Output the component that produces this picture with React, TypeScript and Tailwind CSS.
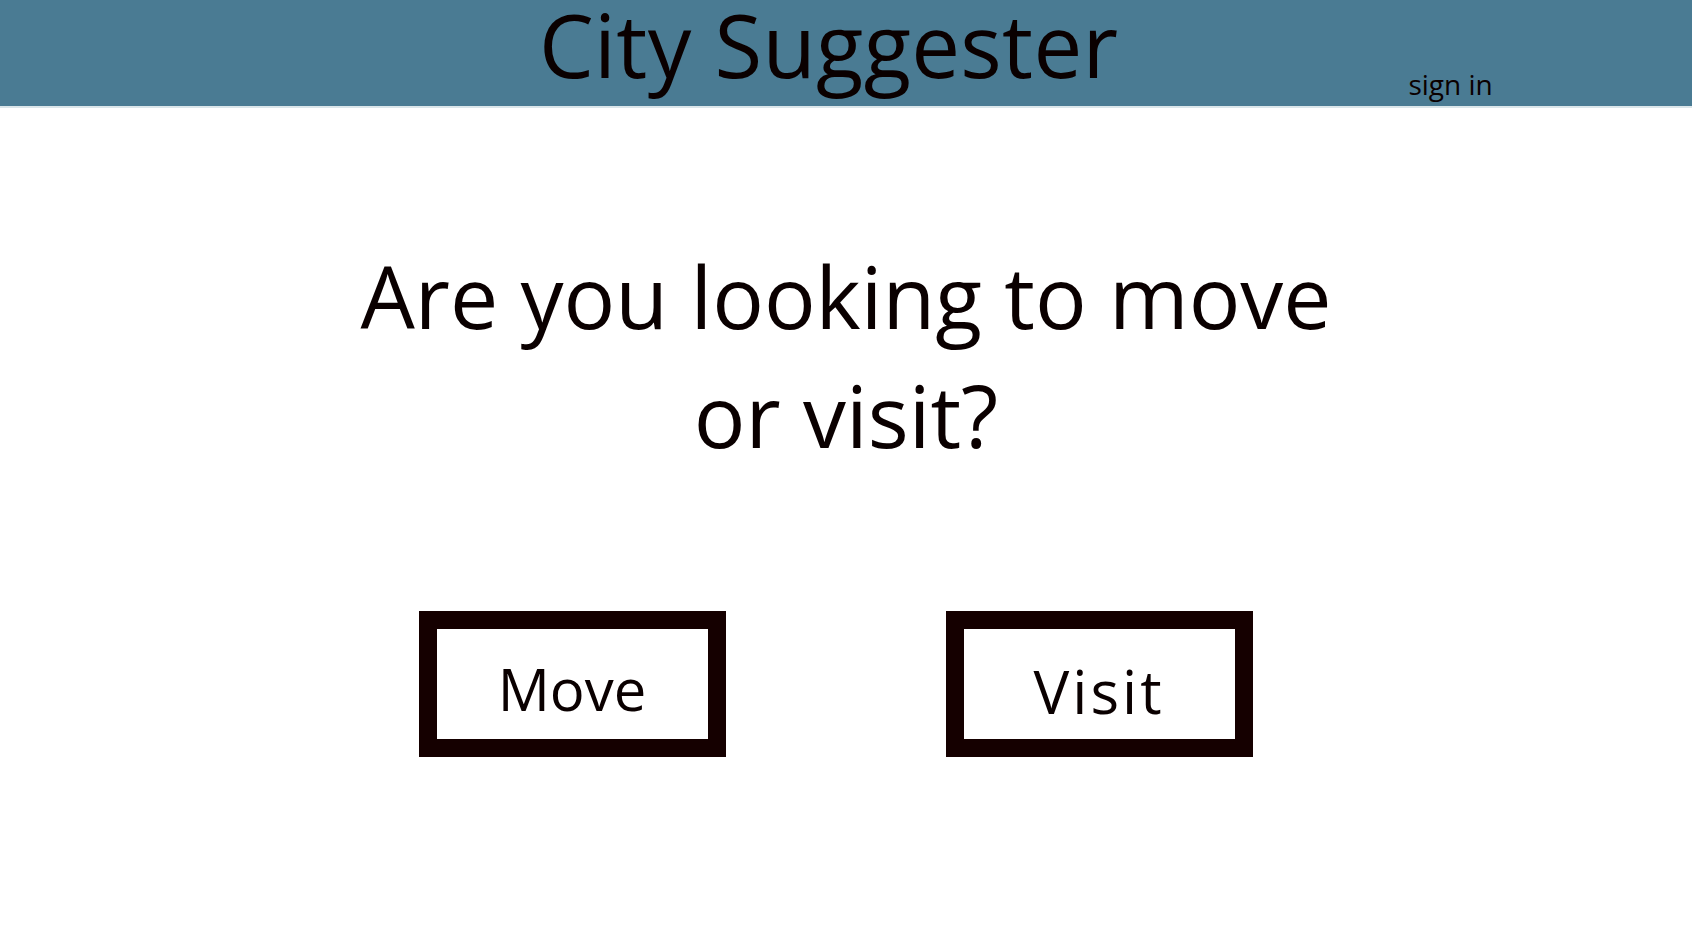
import React from "react";

function ChoiceButton({ label, className = "" }: { label: string; className?: string }) {
  return (
    <button
      type="button"
      className={`w-[307px] h-[146px] border-[18px] border-[#150000] bg-white flex items-center justify-center leading-none text-[#0a0000] ${className}`}
    >
      {label}
    </button>
  );
}

export default function App() {
  return (
    <div className="min-h-screen bg-white font-['Open_Sans',sans-serif] text-[#0a0000]">
      <header className="h-[108px] bg-[#4a7b93] border-b-2 border-[#dbe6ea] flex">
        <div className="w-[539px] shrink-0" />
        <h1 className="text-[87px] leading-none pt-[1px] tracking-[0.3px]">City Suggester</h1>
        <div className="flex-1 flex items-end pb-[8px] pl-[290px]">
          <a href="#" className="text-[28px] leading-none">
            sign in
          </a>
        </div>
      </header>

      <main className="flex flex-col items-center">
        <h2 className="mt-[128px] w-[1010px] text-center text-[86px] leading-[119px]">
          Are you looking to move or visit?
        </h2>

        <div className="mt-[137px] flex gap-[220px] pr-[21px]">
          <ChoiceButton label="Move" className="text-[58px] pt-[10px]" />
          <ChoiceButton label="Visit" className="text-[60px] pt-[14px] tracking-[3px]" />
        </div>
      </main>
    </div>
  );
}
